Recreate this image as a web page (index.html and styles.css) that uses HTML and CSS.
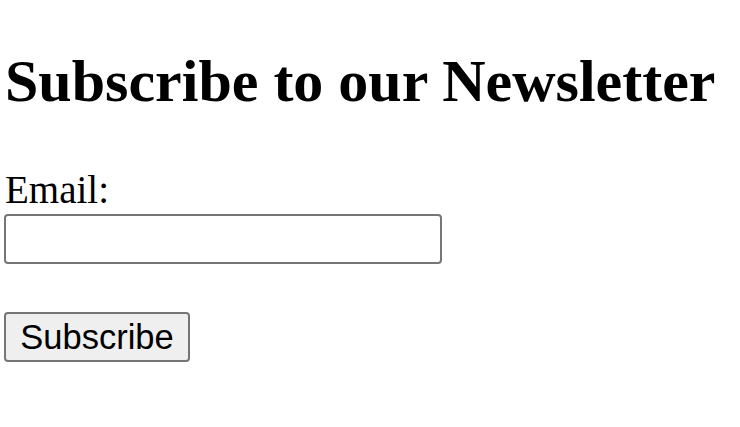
FILE: index.html
```html
<!DOCTYPE html>
<html>
<head>
<meta charset="utf-8">
<link rel="stylesheet" href="styles.css">
</head>
<body>
<h1 class="title">Subscribe to our Newsletter</h1>
<form class="form">
  <label class="label" for="email">Email:</label>
  <input class="input" type="email" id="email">
  <button class="button" type="button">Subscribe</button>
</form>
</body>
</html>
```
FILE: styles.css
```css
html, body { background: #fff; }
body {
  margin: 0;
  padding: 0 4px;
  font-family: "Liberation Serif", serif;
  color: #000;
}
.title {
  font-family: "Liberation Serif", serif;
  font-weight: bold;
  font-size: 60px;
  line-height: 69px;
  margin: 47px 0 0 1px;
}
.form {
  display: flex;
  flex-direction: column;
  align-items: flex-start;
  margin-top: 52px;
}
.label {
  font-size: 39px;
  line-height: 44px;
  margin-left: 1px;
}
.input {
  box-sizing: border-box;
  width: 438px;
  height: 50px;
  margin: 2px 0 0 0;
  border: 2px solid #767676;
  border-radius: 4px;
  background: #fff;
  font-size: 30px;
}
.button {
  box-sizing: border-box;
  height: 50px;
  width: 186px;
  margin-top: 48px;
  border: 2px solid #767676;
  border-radius: 4px;
  background: #efefef;
  font-family: "Liberation Sans", Arial, sans-serif;
  font-size: 34.5px;
  color: #000;
  padding: 0;
}
```
